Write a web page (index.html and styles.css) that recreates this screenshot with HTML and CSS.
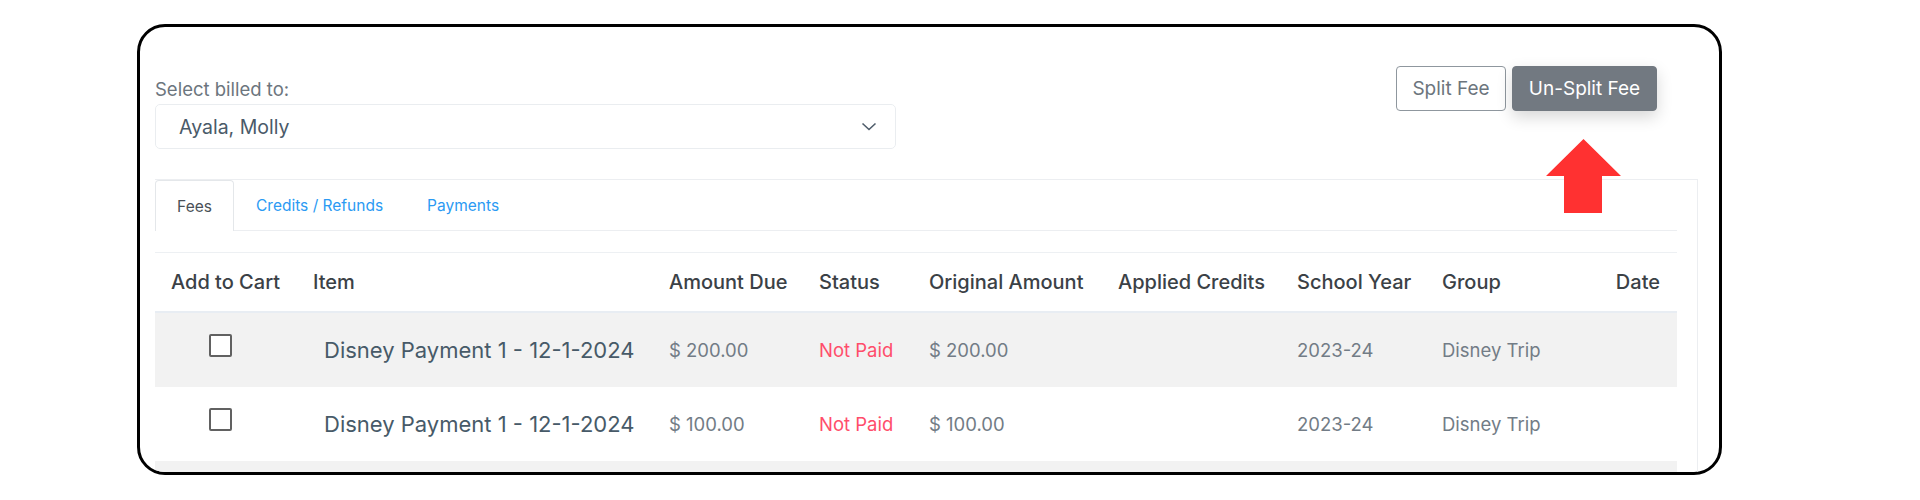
FILE: index.html
```html
<!DOCTYPE html>
<html lang="en">
<head>
    <meta charset="UTF-8">
    <meta name="viewport" content="width=device-width, initial-scale=1.0">
    <title>Student Fees</title>
    <link rel="stylesheet" href="styles.css">
</head>
<body>
    <div class="frame">
        <div class="toolbar">
            <div class="billed">
                <label class="billed-label">Select billed to:</label>
                <div class="select">
                    <span>Ayala, Molly</span>
                    <svg class="chevron" width="16" height="9" viewBox="0 0 16 9">
                        <polyline points="1.5,1.5 8,7.5 14.5,1.5" />
                    </svg>
                </div>
            </div>
            <div class="actions">
                <button class="btn btn-outline">Split Fee</button>
                <button class="btn btn-dark">Un-Split Fee</button>
            </div>
        </div>

        <!-- red pointer under the un-split button -->
        <svg class="pointer-arrow" width="75" height="74" viewBox="0 0 75 74">
            <polygon points="37.5,0 75,37 56,37 56,74 18,74 18,37 0,37" />
        </svg>

        <div class="card">
            <ul class="tabs">
                <li class="tab active">Fees</li>
                <li class="tab">Credits / Refunds</li>
                <li class="tab">Payments</li>
            </ul>

            <table class="fees-table">
                <colgroup>
                    <col style="width: 142px">
                    <col style="width: 356px">
                    <col style="width: 150px">
                    <col style="width: 110px">
                    <col style="width: 189px">
                    <col style="width: 179px">
                    <col style="width: 145px">
                    <col style="width: 151px">
                    <col style="width: 100px">
                </colgroup>
                <thead>
                    <tr>
                        <th>Add to Cart</th>
                        <th>Item</th>
                        <th>Amount Due</th>
                        <th>Status</th>
                        <th>Original Amount</th>
                        <th>Applied Credits</th>
                        <th>School Year</th>
                        <th>Group</th>
                        <th class="date-col">Date</th>
                    </tr>
                </thead>
                <tbody>
                    <tr>
                        <td class="cart-cell"><span class="checkbox"></span></td>
                        <td class="item-cell">Disney Payment 1 - 12-1-2024</td>
                        <td>$ 200.00</td>
                        <td class="status-unpaid">Not Paid</td>
                        <td>$ 200.00</td>
                        <td></td>
                        <td>2023-24</td>
                        <td>Disney Trip</td>
                        <td></td>
                    </tr>
                    <tr>
                        <td class="cart-cell"><span class="checkbox"></span></td>
                        <td class="item-cell">Disney Payment 1 - 12-1-2024</td>
                        <td>$ 100.00</td>
                        <td class="status-unpaid">Not Paid</td>
                        <td>$ 100.00</td>
                        <td></td>
                        <td>2023-24</td>
                        <td>Disney Trip</td>
                        <td></td>
                    </tr>
                    <tr>
                        <td></td>
                        <td></td>
                        <td></td>
                        <td></td>
                        <td></td>
                        <td></td>
                        <td></td>
                        <td></td>
                        <td></td>
                    </tr>
                </tbody>
            </table>
        </div>
    </div>
</body>
</html>
```

FILE: styles.css
```css
body {
    font-family: 'Inter', sans-serif;
    margin: 0;
    padding: 0;
    background: #ffffff;
    color: #495057;
}
.frame {
    position: relative;
    box-sizing: border-box;
    width: 1585px;
    height: 451px;
    margin: 24px 0 0 137px;
    border: 3px solid #000000;
    border-radius: 28px;
    overflow: hidden;
    background: #ffffff;
}

/* Billed-to picker and fee buttons */
.toolbar {
    display: flex;
    justify-content: space-between;
    align-items: flex-start;
    padding: 39px 62px 0 15px;
}
.billed {
    margin-top: 12px;
}
.billed-label {
    display: block;
    font-size: 18.5px;
    line-height: 22px;
    color: #6c757d;
}
.select {
    box-sizing: border-box;
    display: flex;
    align-items: center;
    justify-content: space-between;
    width: 741px;
    height: 45px;
    margin-top: 4px;
    padding: 0 18px 0 23px;
    border: 1px solid #eaedf0;
    border-radius: 5px;
    font-size: 19.5px;
    color: #4a5a69;
}
.chevron polyline {
    fill: none;
    stroke: #4f5d6b;
    stroke-width: 1.6;
}
.actions {
    display: flex;
    gap: 6px;
}
.btn {
    box-sizing: border-box;
    height: 45px;
    padding: 0;
    border-radius: 4px;
    font-family: inherit;
    font-size: 19px;
    cursor: pointer;
}
.btn-outline {
    width: 110px;
    background: #ffffff;
    border: 1px solid #8f979e;
    color: #6c757d;
}
.btn-dark {
    width: 145px;
    background: #727981;
    border: 1px solid #727981;
    color: #ffffff;
    box-shadow: 0 6px 16px rgba(0, 0, 0, 0.16);
}
.pointer-arrow {
    position: absolute;
    left: 1406px;
    top: 112px;
}
.pointer-arrow polygon {
    fill: #ff3131;
}

/* Tabbed fee list */
.card {
    margin: 30px 21px 0 15px;
    padding-right: 20px;
    border-top: 1px solid #eceef1;
    border-right: 1px solid #eceef1;
}
.tabs {
    display: flex;
    list-style: none;
    margin: 0;
    padding: 0;
    height: 50px;
    border-bottom: 1px solid #eceef1;
}
.tab {
    display: flex;
    align-items: center;
    padding: 0 22px;
    font-size: 15.5px;
    color: #2b9af3;
}
.tab.active {
    box-sizing: border-box;
    width: 79px;
    justify-content: center;
    padding: 0;
    color: #495057;
    background: #ffffff;
    border: 1px solid #e4e7ea;
    border-bottom: none;
    border-radius: 4px 4px 0 0;
    margin-bottom: -1px;
}
.fees-table {
    width: 1522px;
    margin-top: 21px;
    table-layout: fixed;
    border-collapse: collapse;
    border-top: 1px solid #edf0f3;
}
.fees-table th {
    height: 58px;
    padding: 0 0 0 16px;
    text-align: left;
    font-size: 20px;
    font-weight: 500;
    color: #3b4146;
    border-bottom: 2px solid #e8edf3;
}
.fees-table th.date-col {
    text-align: right;
    padding: 0 17px 0 0;
}
.fees-table td {
    height: 74px;
    padding: 0 0 0 16px;
    font-size: 18.5px;
    color: #727c86;
}
.fees-table tbody tr:nth-child(odd) td {
    background: #f2f2f2;
}
.fees-table td.cart-cell {
    padding-left: 54px;
}
.fees-table td.item-cell {
    padding-left: 27px;
    font-size: 22px;
    color: #475a68;
}
.fees-table td.status-unpaid {
    color: #ff4d6b;
}
.checkbox {
    display: inline-block;
    box-sizing: border-box;
    width: 23px;
    height: 23px;
    margin-bottom: 9px;
    vertical-align: middle;
    border: 2px solid #616161;
    border-radius: 2px;
    background: #ffffff;
}
```
